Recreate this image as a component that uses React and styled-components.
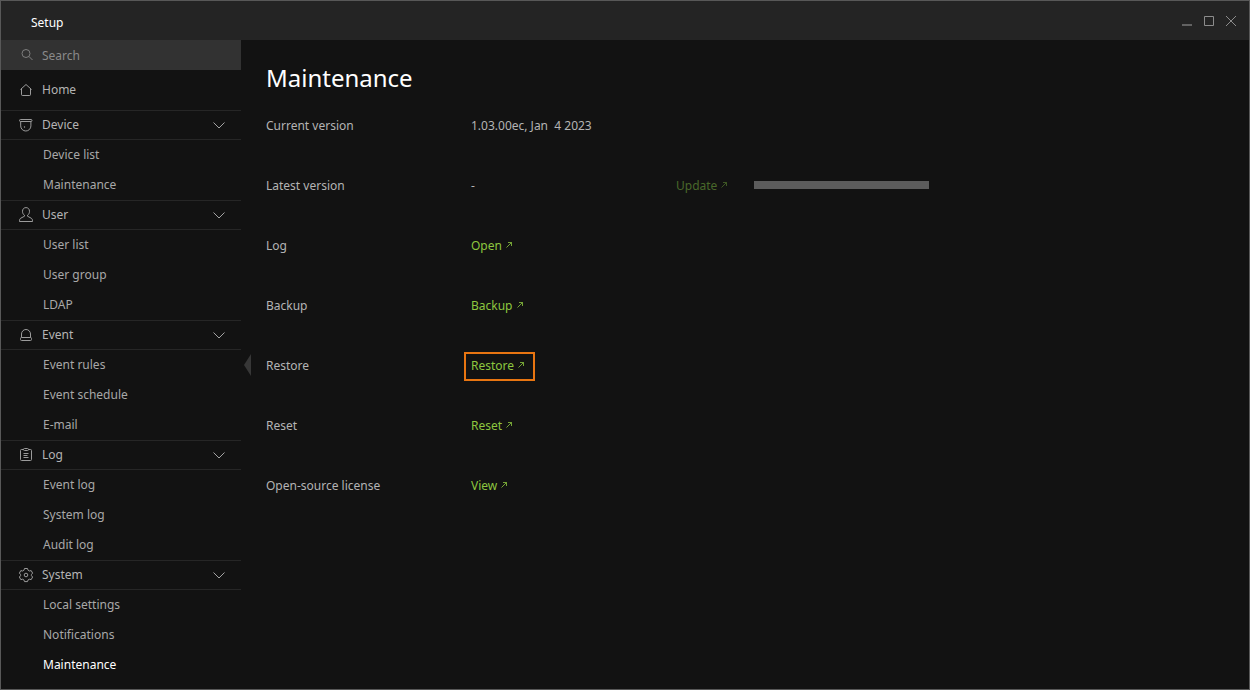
import React from "react";
import styled, { createGlobalStyle, css } from "styled-components";

const GlobalStyle = createGlobalStyle`
  *, *::before, *::after { box-sizing: border-box; }
  body {
    margin: 0;
    background: #121212;
    color: #b4b4b4;
    font-family: "Noto Sans", "Open Sans", sans-serif;
    font-size: 12px;
    line-height: 16px;
  }
  button, input { font: inherit; }
`;

const Window = styled.div`
  min-height: 100vh;
  display: flex;
  flex-direction: column;
  border: 1px solid #585858;
`;

const TitleBar = styled.header`
  display: flex;
  align-items: flex-start;
  justify-content: space-between;
  height: 39px;
  padding: 14px 12px 0 30px;
  background: #242424;
`;

const WindowTitle = styled.span`
  color: #ffffff;
`;

const WindowControls = styled.div`
  display: flex;
  gap: 10px;
`;

const ControlButton = styled.button`
  width: 12px;
  height: 12px;
  padding: 0;
  border: 0;
  background: none;
  color: #8c8c8c;
  cursor: pointer;

  svg { display: block; }
`;

const Body = styled.div`
  flex: 1;
  display: flex;
`;

const Sidebar = styled.nav`
  flex: none;
  width: 240px;
`;

const SearchBox = styled.label`
  display: flex;
  align-items: center;
  gap: 8px;
  height: 30px;
  padding-left: 17px;
  background: #323232;
  color: #8c8c8c;
`;

const SearchInput = styled.input`
  flex: 1;
  min-width: 0;
  padding: 2px 0 0;
  border: 0;
  outline: 0;
  background: none;
  color: #d0d0d0;

  &::placeholder { color: #8a8a8a; opacity: 1; }
`;

const HomeLink = styled.a`
  display: flex;
  align-items: center;
  gap: 8px;
  height: 40px;
  padding-left: 17px;
  color: #b4b4b4;
  text-decoration: none;
`;

const GroupHeader = styled.button`
  display: flex;
  align-items: center;
  gap: 8px;
  width: 100%;
  height: 30px;
  padding: 0 15px 0 17px;
  border: solid #262626;
  border-width: 1px 0;
  background: none;
  color: #b4b4b4;
  text-align: left;
  cursor: pointer;
`;

const GroupName = styled.span`
  flex: 1;
`;

const ItemList = styled.ul`
  margin: 0;
  padding: 0;
  list-style: none;
`;

const ItemLink = styled.a`
  display: flex;
  align-items: center;
  height: 30px;
  padding-left: 42px;
  color: ${(p) => (p.$active ? "#ffffff" : "#a8a8a8")};
  text-decoration: none;
`;

const CollapseButton = styled.button`
  flex: none;
  display: flex;
  align-items: center;
  justify-content: flex-end;
  width: 10px;
  padding: 0;
  border: 0;
  background: none;
  color: #373737;
  cursor: pointer;
`;

const Main = styled.main`
  flex: 1;
  min-width: 0;
  padding: 20px 15px 0;
`;

const Heading = styled.h1`
  margin: 0;
  color: #ffffff;
  font-size: 24px;
  font-weight: 400;
  line-height: 36px;
`;

const Settings = styled.dl`
  margin: 0;
`;

const SettingRow = styled.div`
  display: flex;
  align-items: center;
  height: 60px;
`;

const SettingLabel = styled.dt`
  flex: none;
  width: 205px;
`;

const SettingValue = styled.dd`
  display: flex;
  align-items: center;
  margin: 0;
`;

const ValueText = styled.span`
  width: 205px;
  white-space: pre;
`;

const highlightFrame = css`
  &::after {
    content: "";
    position: absolute;
    inset: -6px -11px -7px -7px;
    border: 2px solid #e87511;
  }
`;

const ActionButton = styled.button`
  position: relative;
  display: flex;
  align-items: center;
  gap: 4px;
  padding: 0;
  border: 0;
  background: none;
  color: #8dc63f;
  cursor: pointer;

  svg { margin-bottom: 2px; }

  &:disabled { color: #49682a; cursor: default; }
  ${(p) => p.$highlighted && highlightFrame}
`;

const ProgressTrack = styled.div`
  width: 175px;
  height: 8px;
  margin: 0 0 2px 27px;
  background: #5c5c5c;
`;

const Glyph = ({ children, size = 16 }) => (
  <svg
    width={size}
    height={size}
    viewBox={`0 0 ${size} ${size}`}
    fill="none"
    stroke="currentColor"
    strokeWidth="1"
    strokeLinejoin="round"
    aria-hidden="true"
  >
    {children}
  </svg>
);

const icons = {
  search: (
    <>
      <circle cx="8" cy="6.5" r="4" />
      <path d="M11 9.5l3.5 3.5" />
    </>
  ),
  home: <path d="M2.5 7.5L8 2.5l5.5 5M3.5 6.8v5.7a1 1 0 0 0 1 1h7a1 1 0 0 0 1-1V6.8" />,
  device: (
    <>
      <rect x="1.5" y="2.5" width="12.5" height="2" rx="1" />
      <path d="M2.7 4.5v4.400a5.100 5.100 0 0 0 10.200 0V4.500" />
      <circle cx="6.500" cy="10" r=".7" fill="currentColor" stroke="none" />
    </>
  ),
  user: (
    <path d="M6.5 8.3C5.2 7.4 4.5 6 4.5 4.3 4.5 2 6 .6 8 .6s3.5 1.4 3.5 3.7c0 1.7-.7 3.1-2 4v.9l3.7 2c1 .6 1.3 1.3 1.3 3.300h-13c0-2 .3-2.700 1.300-3.300l3.700-2z" />
  ),
  event: (
    <>
      <path d="M3.5 10.5V7a4.5 4.5 0 0 1 9 0v3.5" />
      <rect x="2.5" y="10.5" width="11" height="3" rx="1" />
    </>
  ),
  log: (
    <>
      <path d="M5.5 2.5h-2a1 1 0 0 0-1 1v9a1 1 0 0 0 1 1h9a1 1 0 0 0 1-1v-9a1 1 0 0 0-1-1h-2" />
      <rect x="5.5" y="1.5" width="5" height="2" rx="1" />
      <path d="M5.500 6.500h5M5.500 8.500h4M5.500 10.500h5" />
    </>
  ),
  system: (
    <>
      <path d="M6.500 1.500h3l.6 1.800 1.200.7 1.900-.4 1.400 2.500-1.200 1.500v1l1.200 1.400-1.400 2.600-1.900-.4-1.200.7-.6 1.700h-3l-.6-1.700-1.200-.7-1.900.4-1.400-2.600 1.200-1.400v-1L1.400 6.100l1.400-2.500 1.900.4 1.200-.7z" />
      <circle cx="8" cy="8" r="1.800" />
    </>
  ),
};

const Icon = ({ name }) => (
  <Glyph>
    <g opacity=".85">{icons[name]}</g>
  </Glyph>
);

const Chevron = () => (
  <svg width="14" height="8" viewBox="0 0 14 8" fill="none" stroke="currentColor" aria-hidden="true">
    <path d="M1.500 1.500L7 7l5.500-5.500" opacity=".9" />
  </svg>
);

const LinkArrow = () => (
  <Glyph size={6}>
    <path d="M.5 5.500l5-5M2 .5h3.500V4" strokeWidth=".8" />
  </Glyph>
);

const groups = [
  { icon: "device", name: "Device", items: ["Device list", "Maintenance"] },
  { icon: "user", name: "User", items: ["User list", "User group", "LDAP"] },
  { icon: "event", name: "Event", items: ["Event rules", "Event schedule", "E-mail"] },
  { icon: "log", name: "Log", items: ["Event log", "System log", "Audit log"] },
  {
    icon: "system",
    name: "System",
    items: ["Local settings", "Notifications", "Maintenance"],
    active: "Maintenance",
  },
];

const settings = [
  { label: "Current version", value: "1.03.00ec, Jan  4 2023" },
  { label: "Latest version", value: "-", action: "Update", disabled: true, progress: true },
  { label: "Log", action: "Open" },
  { label: "Backup", action: "Backup" },
  { label: "Restore", action: "Restore", highlighted: true },
  { label: "Reset", action: "Reset" },
  { label: "Open-source license", action: "View" },
];

export default function App() {
  return (
    <>
      <GlobalStyle />
      <Window>
        <TitleBar>
          <WindowTitle>Setup</WindowTitle>
          <WindowControls>
            <ControlButton aria-label="Minimize">
              <Glyph size={12}>
                <path d="M1 10h10" strokeWidth="2" opacity=".6" />
              </Glyph>
            </ControlButton>
            <ControlButton aria-label="Maximize">
              <Glyph size={12}>
                <path d="M1.500 1.500h9v9h-9z" />
              </Glyph>
            </ControlButton>
            <ControlButton aria-label="Close">
              <Glyph size={12}>
                <path d="M1 1l10 10M11 1L1 11" />
              </Glyph>
            </ControlButton>
          </WindowControls>
        </TitleBar>
        <Body>
          <Sidebar>
            <SearchBox>
              <Icon name="search" />
              <SearchInput type="text" placeholder="Search" aria-label="Search" />
            </SearchBox>
            <HomeLink href="#home">
              <Icon name="home" />
              Home
            </HomeLink>
            {groups.map((group) => (
              <section key={group.name}>
                <GroupHeader aria-expanded="true">
                  <Icon name={group.icon} />
                  <GroupName>{group.name}</GroupName>
                  <Chevron />
                </GroupHeader>
                <ItemList>
                  {group.items.map((item) => (
                    <li key={item}>
                      <ItemLink href="#item" $active={item === group.active}>
                        {item}
                      </ItemLink>
                    </li>
                  ))}
                </ItemList>
              </section>
            ))}
          </Sidebar>
          <CollapseButton aria-label="Collapse menu">
            <svg width="7" height="22" viewBox="0 0 7 22" fill="currentColor" aria-hidden="true">
              <path d="M7 0v22L0 11z" />
            </svg>
          </CollapseButton>
          <Main>
            <Heading>Maintenance</Heading>
            <Settings>
              {settings.map((row) => (
                <SettingRow key={row.label}>
                  <SettingLabel>{row.label}</SettingLabel>
                  <SettingValue>
                    {row.value && <ValueText>{row.value}</ValueText>}
                    {row.action && (
                      <ActionButton disabled={row.disabled} $highlighted={row.highlighted}>
                        {row.action}
                        <LinkArrow />
                      </ActionButton>
                    )}
                    {row.progress && <ProgressTrack role="progressbar" aria-label="Update progress" />}
                  </SettingValue>
                </SettingRow>
              ))}
            </Settings>
          </Main>
        </Body>
      </Window>
    </>
  );
}
